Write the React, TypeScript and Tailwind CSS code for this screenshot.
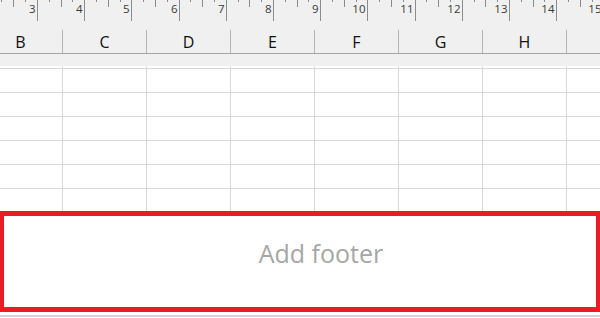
const COLUMNS = ['C', 'D', 'E', 'F', 'G', 'H']
const ROWS = [0, 1, 2, 3, 4]

function Ruler() {
  const majors = [3, 4, 5, 6, 7, 8, 9, 10, 11, 12, 13, 14, 15]
  const unit = 47.2
  const pos = (n: number) => 37.4 + (n - 3) * unit

  return (
    <svg width="600" height="30" className="block">
      {[2, ...majors].map(n => {
        const x = pos(n)
        return (
          <g key={n}>
            <line x1={Math.floor(x) + 0.5} y1="0" x2={Math.floor(x) + 0.5} y2="21" stroke="#8c8c8c" />
            <line x1={Math.floor(x + unit / 4) + 0.5} y1="0" x2={Math.floor(x + unit / 4) + 0.5} y2="2" stroke="#8c8c8c" />
            <line x1={Math.floor(x + unit / 2) + 0.5} y1="0" x2={Math.floor(x + unit / 2) + 0.5} y2="7" stroke="#8c8c8c" />
            <line x1={Math.floor(x + (unit * 3) / 4) + 0.5} y1="0" x2={Math.floor(x + (unit * 3) / 4) + 0.5} y2="2" stroke="#8c8c8c" />
            {n > 2 && (
              <text
                x={Math.floor(x) - 1.5}
                y="12.5"
                textAnchor="end"
                fontSize="11.5"
                fill="#3a3a3a"
                fontFamily="'Open Sans', sans-serif"
              >
                {n}
              </text>
            )}
          </g>
        )
      })}
    </svg>
  )
}

export default function App() {
  return (
    <div className="w-[600px] h-[318px] overflow-hidden bg-white font-['Open_Sans',sans-serif]">
      {/* ruler */}
      <div className="h-[30px] bg-[#f0f0f0]">
        <Ruler />
      </div>

      {/* column headers */}
      <div className="flex h-[24px] bg-[#f0f0f0] border-b border-[#a6a6a6] text-[16px] text-[#111]">
        <div className="w-[63px] shrink-0 flex items-center justify-center pr-[21px] border-r border-[#b4b4b4]">B</div>
        {COLUMNS.map(c => (
          <div key={c} className="w-[84px] shrink-0 flex items-center justify-center border-r border-[#b4b4b4]">
            {c}
          </div>
        ))}
        <div className="flex-1" />
      </div>

      {/* page top margin strip */}
      <div className="h-[12px] bg-[#f0f0f0]" />

      {/* grid */}
      <div className="flex flex-col">
        <GridRow height="h-[3px]" />
        {ROWS.map(r => (
          <GridRow key={r} height="h-[24px]" />
        ))}
        <GridRow height="h-[22px]" last />
      </div>

      {/* footer area */}
      <div className="h-[101px] border-x-[4px] border-y-[5px] border-[#ed1c24] flex justify-center items-start pt-[25px] pl-[42px]">
        <span className="text-[25px] leading-none text-[#a6a6a6]">Add footer</span>
      </div>

      <div className="mt-[3px] h-[2px] bg-[#d4d4d4]" />
    </div>
  )
}

function GridRow({ height, last }: { height: string; last?: boolean }) {
  return (
    <div className={`flex ${height} ${last ? '' : 'border-b border-[#d9d9d9]'}`}>
      <div className="w-[63px] shrink-0 border-r border-[#d9d9d9]" />
      {COLUMNS.map(c => (
        <div key={c} className="w-[84px] shrink-0 border-r border-[#d9d9d9]" />
      ))}
      <div className="flex-1" />
    </div>
  )
}
